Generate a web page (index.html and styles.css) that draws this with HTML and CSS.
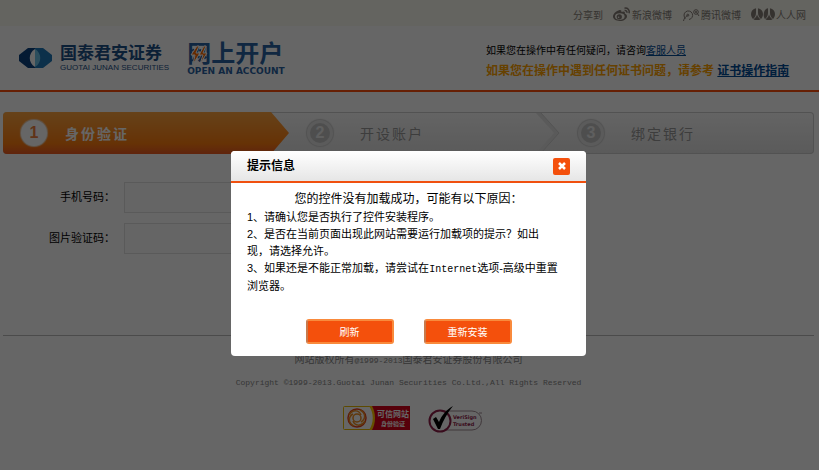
FILE: index.html
```html
<!DOCTYPE html>
<html lang="zh-CN">
<head>
  <meta charset="UTF-8">
  <title>网上开户</title>
  <link rel="stylesheet" href="styles.css">
</head>
<body>

  <div class="topbar">
    <span>分享到</span>
    <a href="#">
      <svg width="18" height="14" viewBox="0 0 18 14">
        <path fill="#857e77" d="M6 3.200C2.800 4.200 0 7 0 9.600 0 12.200 3.100 14 6.800 14c4.200 0 7.200-2.300 7.200-4.800 0-1.400-1-2.200-2.200-2.600.6-1.900-.8-2.800-3.400-1.600C8.700 3.600 7.900 2.700 6 3.200z"/>
        <ellipse cx="6.800" cy="9.600" rx="4.800" ry="3.300" fill="#fbf9f0"/>
        <circle cx="6.300" cy="9.800" r="2.600" fill="#857e77"/>
        <circle cx="5.600" cy="10.200" r=".8" fill="#fbf9f0"/>
        <path fill="none" stroke="#857e77" stroke-width="1.500" d="M11.500 1.200c3-.7 5.500 2 4.500 5M11.600 3.500c1.500-.3 2.600.8 2.200 2.200"/>
      </svg>新浪微博</a>
    <a href="#">
      <svg width="18" height="14" viewBox="0 0 18 14">
        <g fill="none" stroke="#857e77">
          <path d="M3.500 11.500A4.300 4.300 0 1 1 7 12.500M1.500 14c.5-2.500 1.500-4 4-5.500"/>
          <circle cx="5.800" cy="8.200" r="1"/>
          <circle cx="14" cy="5" r="2.300"/>
          <path d="M15 6l2 3"/>
        </g>
        <circle cx="14" cy="5" r="1" fill="#857e77"/>
      </svg>腾讯微博</a>
    <a href="#">
      <svg width="24" height="12" viewBox="0 0 24 12">
        <g fill="#857e77">
          <path d="M5 .3v4.500C5 7.500 4 9.500 2 11 .8 9.800 0 8 0 6 0 3.200 2 .8 5 .3z"/>
          <path d="M6 6.500c.8 2 1.800 3.500 3.500 4.800a7 7 0 0 1-7 0C4.300 10 5.500 8.500 6 6.500z"/>
          <path d="M7 .3c3 .5 5 2.900 5 5.700 0 2-.8 3.800-2 5-2-1.500-3-3.500-3-6.200z"/>
          <path d="M17 .3v4.500c0 2.700-1 4.700-3 6.200-.8-1-1.300-2.300-1.300-4C12.700 3.700 14 .8 17 .3z"/>
          <path d="M18 6.500c.8 2 1.800 3.500 3.500 4.800a7 7 0 0 1-7 0c1.800-1.300 3-2.800 3.500-4.800z"/>
          <path d="M19 .3c3 .5 5 2.900 5 5.700 0 2-.8 3.800-2 5-2-1.500-3-3.500-3-6.200z"/>
        </g>
      </svg>人人网</a>
  </div>

  <div class="header">
    <div class="brand">
      <svg width="33" height="20" viewBox="0 0 33 20">
        <path fill="#0b4180" d="M9 0h8v20H9L0 13V7z"/>
        <path fill="#1f78b8" d="M16 0h8l9 7v6l-9 7h-8z"/>
        <path fill="#fff" d="M16 1c-7 4-7 14 0 18z"/>
        <path fill="#6fc4e8" d="M16 1c7 4 7 14 0 18z"/>
      </svg>
      <div class="brand-text">
        <strong>国泰君安证券</strong>
        <small>GUOTAI JUNAN SECURITIES</small>
      </div>
    </div>
    <div class="product">
      <strong>网上开户</strong>
      <small>OPEN AN ACCOUNT</small>
      <svg class="bolts" width="18" height="20" viewBox="0 0 18 20">
        <path fill="#ff6a00" stroke="#fff" d="M7 1L1 10h4L3 19l7-11H6l3-7zM14 1L9 10h4l-3 9 7-11h-4l3-7z"/>
      </svg>
    </div>
    <div class="help">
      <p>如果您在操作中有任何疑问，请咨询<a href="#">客服人员</a></p>
      <p class="cert">如果您在操作中遇到任何证书问题，请参考 <a href="#">证书操作指南</a></p>
    </div>
  </div>

  <ol class="steps">
    <li class="step active"><span class="num">1</span>身份验证</li>
    <li class="step"><span class="num">2</span>开设账户
      <svg class="chevron" width="24" height="42" viewBox="0 0 24 42">
        <path fill="#e2e2e2" d="M0 1h5l18 20L5 41H0l18-20z"/>
        <path fill="none" stroke="#d0d0d0" d="M5 1l18 20L5 41"/>
      </svg>
    </li>
    <li class="step"><span class="num">3</span>绑定银行</li>
  </ol>

  <form class="form">
    <label for="mobile">手机号码：</label>
    <input type="text" id="mobile">
    <label for="captcha">图片验证码：</label>
    <input type="text" id="captcha">
  </form>

  <div class="footer">
    <p>网站版权所有<span class="latin">@1999-2013</span>国泰君安证券股份有限公司</p>
    <p class="latin">Copyright ©1999-2013.Guotai Junan Securities Co.Ltd.,All Rights Reserved</p>
    <div class="badges">
      <svg width="67" height="24" viewBox="0 0 67 24">
        <rect x=".5" y=".5" width="66" height="23" rx="1" fill="#fff" stroke="#e8b800"/>
        <path fill="#ffc800" d="M26 0h8v24h-8c5-7 5-17 0-24z"/>
        <path fill="#d8001b" d="M29 0h38v24H29c4-7 4-17 0-24z"/>
        <g fill="none" stroke-width="1.500">
          <circle cx="14" cy="12" r="9" stroke="#e8401c"/>
          <circle cx="14" cy="12" r="4" stroke="#f08c1e"/>
          <path stroke="#f08c1e" d="M6 9c4-6 10-5 12 0M17 4c6 3 6 9 1 12M22 15c-4 6-10 5-12 0M11 20c-6-3-6-9-1-12"/>
        </g>
        <text class="seal-name" x="34" y="11">可信网站</text>
        <text class="seal-sub" x="38" y="20">身份验证</text>
      </svg>
      <svg width="55" height="27" viewBox="0 0 55 27">
        <path fill="#fff" stroke="#a08c94" d="M16 5h28a9 9 0 0 1 0 19H16z"/>
        <circle cx="12" cy="15" r="10.500" fill="#fff" stroke="#90204a" stroke-width="2"/>
        <path d="M5 13l3-2 3 5C14 9 18 4 25 0 19 7 15 15 12 23h-2z"/>
        <path stroke="#a08c94" d="M51 7h3"/>
        <text class="vs-text" x="25" y="13">VeriSign</text>
        <text class="vs-text" x="25" y="20">Trusted</text>
      </svg>
    </div>
  </div>

  <div class="overlay">
    <div class="dialog" role="dialog" aria-labelledby="dialogTitle">
      <div class="dialog-head">
        <h2 id="dialogTitle">提示信息</h2>
        <button type="button" class="close" aria-label="关闭">
          <svg width="8" height="8" viewBox="0 0 8 8">
            <path stroke="#fff" stroke-width="2.500" d="M1 1l6 6M7 1L1 7"/>
          </svg>
        </button>
      </div>
      <div class="dialog-body">
        <p class="lead">您的控件没有加载成功，可能有以下原因：</p>
        <p>1、请确认您是否执行了控件安装程序。</p>
        <p>2、是否在当前页面出现此网站需要运行加载项的提示？如出<br>现，请选择允许。</p>
        <p>3、如果还是不能正常加载，请尝试在<span class="latin">Internet</span>选项-高级中重置<br>浏览器。</p>
      </div>
      <div class="dialog-foot">
        <button type="button" class="btn">刷新</button>
        <button type="button" class="btn">重新安装</button>
      </div>
    </div>
  </div>

</body>
</html>
```

FILE: styles.css
```css
* {
  box-sizing: border-box;
}
body {
  margin: 0;
  background-color: #fff;
  color: #000;
  font-family: "Liberation Sans", "Noto Sans CJK SC", sans-serif;
  font-size: 11px;
}
p, h2, ol {
  margin: 0;
  padding: 0;
}

/* top bar */
.topbar {
  display: flex;
  justify-content: flex-end;
  align-items: center;
  gap: 10px;
  height: 26px;
  padding: 2px 13px 0 0;
  background-color: #fbf9f0;
  color: #857e77;
  font-size: 10px;
}
.topbar a {
  display: flex;
  align-items: center;
  gap: 1px;
  color: #857e77;
  text-decoration: none;
}

/* header */
.header {
  display: flex;
  align-items: center;
  height: 66px;
  padding-left: 19px;
  border-bottom: 2px solid #ff4e0a;
}
.brand {
  display: flex;
  align-items: center;
  gap: 8px;
}
.brand strong, .brand small,
.product strong, .product small {
  display: block;
  white-space: nowrap;
}
.brand-text {
  color: #1d5087;
}
.brand strong {
  font-size: 17px;
  line-height: 18px;
}
.brand small {
  font-size: 8px;
  line-height: 9px;
}
.product {
  position: relative;
  margin-left: 18px;
  color: #2a63a4;
}
.product strong {
  font-size: 24px;
  line-height: 26px;
}
.product small {
  font-family: "DejaVu Sans", sans-serif;
  font-size: 9px;
  font-weight: bold;
  line-height: 9px;
}
.bolts {
  position: absolute;
  left: 3px;
  top: 4px;
}
.help {
  margin-left: auto;
  padding-top: 6px;
  width: 333px;
  font-size: 10px;
  line-height: 20px;
}
.help a {
  color: #004b97;
}
.help .cert {
  color: #ffa200;
  font-size: 12px;
  font-weight: bold;
}

/* steps */
.steps {
  display: grid;
  grid-template-columns: 286fr 271fr 254fr;
  margin: 20px 5px 0 3px;
  height: 42px;
  border-radius: 4px;
  background: linear-gradient(#fafafa, #e2e2e2);
  box-shadow: inset 0 0 0 1px #ccc;
  list-style: none;
}
.step {
  position: relative;
  display: flex;
  align-items: center;
  gap: 27px;
  padding-left: 18px;
  color: #999;
  font-size: 14px;
  letter-spacing: 2px;
}
.num {
  display: flex;
  justify-content: center;
  width: 26px;
  height: 26px;
  border: 3px solid #e4e4e4;
  border-radius: 50%;
  background-color: #c4c4c4;
  box-shadow: 0 0 1px 1px #ccc;
  color: #eee;
  font-size: 16px;
  font-weight: bold;
  line-height: 20px;
  letter-spacing: 0;
}
.step.active {
  gap: 18px;
  border-radius: 4px 0 0 4px;
  background: linear-gradient(#ffa641, #ff7e10 75%, #ee5a22);
  clip-path: polygon(0 0, calc(100% - 18px) 0, 100% 50%, calc(100% - 18px) 100%, 0 100%);
  color: #fff;
  font-weight: bold;
}
.active .num {
  border-color: #fff;
  background-color: #fff;
  box-shadow: 0 0 1px 1px #f0d8c0;
  color: #f08040;
}
.chevron {
  position: absolute;
  right: 0;
  top: 0;
}

/* form */
.form {
  display: grid;
  grid-template-columns: 115px 200px;
  column-gap: 9px;
  row-gap: 10px;
  align-items: center;
  margin-top: 28px;
}
.form label {
  padding-bottom: 4px;
  text-align: right;
}
.form input {
  height: 31px;
  border: 1px solid #e2e2e2;
  background-color: #fdfdfd;
}

/* footer */
.footer {
  margin: 81px 5px 0 3px;
  padding-top: 13px;
  border-top: 1px solid #bbb;
  color: #888;
  font-size: 10px;
  line-height: 22px;
  text-align: center;
}
.latin {
  font-family: "Liberation Mono", monospace;
}
.footer .latin {
  font-size: 8px;
}
.badges {
  display: flex;
  justify-content: center;
  gap: 18px;
  margin: 12px 0 0 8px;
}
.seal-name {
  fill: #fff;
  font-size: 8px;
  font-weight: bold;
}
.seal-sub {
  fill: #fff;
  font-size: 6px;
  font-weight: bold;
}
.vs-text {
  fill: #90204a;
  font-family: "DejaVu Sans", sans-serif;
  font-size: 5px;
  font-weight: bold;
}

/* dialog */
.overlay {
  position: fixed;
  inset: 0;
  display: flex;
  justify-content: center;
  align-items: flex-start;
  padding: 151px 2px 0 0;
  background-color: rgba(0,0,0,0.6);
}
.dialog {
  width: 355px;
  border-radius: 4px;
  background-color: #fff;
  overflow: hidden;
}
.dialog-head {
  display: flex;
  justify-content: space-between;
  align-items: center;
  height: 32px;
  padding: 0 16px;
  border-bottom: 2px solid #f0500f;
  background: linear-gradient(#fff, #e6e6e6);
}
.dialog-head h2 {
  padding-bottom: 3px;
  font-size: 12px;
}
.close {
  display: flex;
  justify-content: center;
  align-items: center;
  width: 17px;
  height: 17px;
  padding: 0;
  border: none;
  border-radius: 2px;
  background-color: #f4500c;
  cursor: pointer;
}
.dialog-body {
  padding: 6px 16px 0;
  line-height: 17px;
}
.dialog-body .lead {
  font-size: 12px;
  line-height: 20px;
  text-align: center;
}
.dialog-body .latin {
  font-size: 10px;
}
.dialog-foot {
  display: flex;
  justify-content: center;
  gap: 30px;
  padding: 24px 0 12px;
}
.btn {
  width: 88px;
  height: 25px;
  padding: 0;
  border: 2px solid #f98a3c;
  border-left-color: #c87a4c;
  border-radius: 3px;
  background-color: #f4500c;
  color: #fff;
  font-family: inherit;
  font-size: 10px;
  cursor: pointer;
}
```
